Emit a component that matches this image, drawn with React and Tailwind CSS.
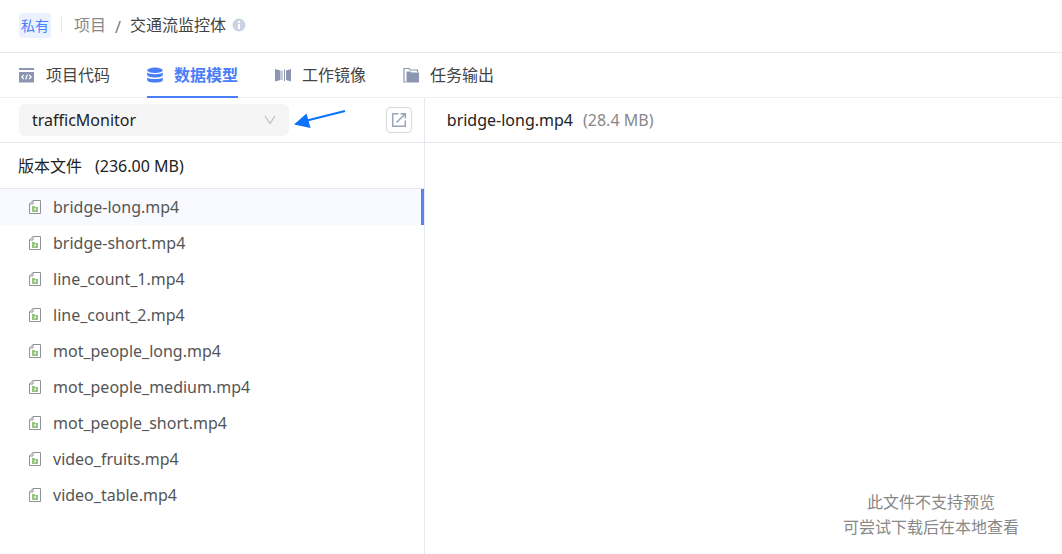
import React, { useState } from "react";

const files = [
  "bridge-long.mp4",
  "bridge-short.mp4",
  "line_count_1.mp4",
  "line_count_2.mp4",
  "mot_people_long.mp4",
  "mot_people_medium.mp4",
  "mot_people_short.mp4",
  "video_fruits.mp4",
  "video_table.mp4",
];

function CodeIcon() {
  return (
    <svg className="size-4 shrink-0" viewBox="0 0 16 16" aria-hidden="true">
      <path d="M0 1h15v2H0zM0 5h15v10.500H0z" fill="#8c96b0" />
      <path d="M4.800 8 2.800 10l2 2M10.200 8l2 2-2 2M8.300 7.500l-1.600 5" fill="none" stroke="#fff" strokeWidth="1.1" />
    </svg>
  );
}

function DataIcon() {
  return (
    <svg className="size-4 shrink-0" viewBox="0 0 16 16" aria-hidden="true">
      <g fill="#4a7df8">
        <ellipse cx="8" cy="3.3" rx="7.8" ry="2.7" />
        <path d="M0.2 5.6C2 7.8 14 7.8 15.8 5.6v2.3c0 3.3-15.6 3.3-15.6 0z" />
        <path d="M0.2 10.4c1.8 2.2 13.8 2.2 15.6 0v2.5c0 3.5-15.6 3.5-15.6 0z" />
      </g>
    </svg>
  );
}

function MirrorIcon() {
  return (
    <svg className="size-4 shrink-0" viewBox="0 0 16 16" aria-hidden="true">
      <path d="M0 2l5.500 1.500v9.500L0 14.500zM6.500 3.500h1v9.500h-1zM9 2.500h1v11.500H9zM16 2l-5 1.500v9.500l5 1.500z" fill="#8c96b0" />
    </svg>
  );
}

function OutputIcon() {
  return (
    <svg className="size-4 shrink-0" viewBox="0 0 16 16" aria-hidden="true">
      <path d="M3 15H1V1.500H6L7.500 3H14.500V5" fill="none" stroke="#8c96b0" strokeWidth="1.2" />
      <path d="M3.500 4.500h4l1 1H16v10H3.500z" fill="#8c96b0" />
    </svg>
  );
}

function VideoFileIcon() {
  return (
    <svg className="h-[14px] w-3 shrink-0" viewBox="0 0 12 14" aria-hidden="true">
      <path d="M4 0.500h7.500v13H0.500V4z" fill="#fff" stroke="#909298" />
      <path d="M4 0.500V4H0.500" fill="none" stroke="#909298" />
      <path d="M3 6h2.500l0.700 1H9v5H3z" fill="#98c482" />
      <path d="M5.200 8.300h1.800v2H5.200z" fill="#e6f2df" />
    </svg>
  );
}

const tabs = [
  { label: "项目代码", Icon: CodeIcon },
  { label: "数据模型", Icon: DataIcon },
  { label: "工作镜像", Icon: MirrorIcon },
  { label: "任务输出", Icon: OutputIcon },
];

export default function App() {
  const [tab, setTab] = useState(1);
  const [file, setFile] = useState(0);

  return (
    <div className="flex min-h-screen flex-col bg-white font-['Noto_Sans','Noto_Sans_CJK_SC',sans-serif] text-base leading-6 text-[#222]">
      <header className="flex h-[53px] items-center border-b border-[#e6e8f0] px-[19px] pb-[2px]">
        <span className="rounded-[3px] bg-[#ebf1ff] px-[2px] text-sm leading-[25px] text-[#4a7df8]">私有</span>
        <span className="ml-[10px] h-4 w-px bg-[#e6e8ee]" />
        <nav aria-label="路径" className="ml-3 flex items-center">
          <a href="#projects" className="text-[#888]">项目</a>
          <span className="mx-[9px] mt-1 text-[#777]">/</span>
          <span className="text-[#444]">交通流监控体</span>
        </nav>
        <button type="button" aria-label="说明" className="ml-[6px]">
          <svg className="size-[14px]" viewBox="0 0 14 14" aria-hidden="true">
            <circle cx="7" cy="7" r="6.500" fill="#ccd3e3" />
            <path d="M6 3h2v2H6zM6 6h2v5H6z" fill="#fff" />
          </svg>
        </button>
      </header>

      <nav aria-label="项目" className="flex h-[45px] gap-[37px] border-b border-[#eceef3] px-[19px]">
        {tabs.map(({ label, Icon }, i) => (
          <button
            key={label}
            type="button"
            onClick={() => setTab(i)}
            className={
              i === tab
                ? "-mb-px flex items-center gap-[11px] whitespace-nowrap border-b-2 border-[#4a7df8] font-bold text-[#4a7df8]"
                : "-mb-px flex items-center gap-[11px] whitespace-nowrap border-b-2 border-transparent text-[#444]"
            }
          >
            <Icon />
            {label}
          </button>
        ))}
      </nav>

      <div className="flex grow">
        <aside className="w-2/5 border-r border-[#e6e8f0]">
          <div className="flex h-[45px] items-center justify-between border-b border-[#e6e8f0] pl-[19px] pr-3">
            <div className="relative w-[270px]">
              <select
                aria-label="数据模型"
                defaultValue="trafficMonitor"
                className="h-8 w-full appearance-none rounded-md bg-[#f5f5f5] pl-[13px] pr-8 text-[#222]"
              >
                <option>trafficMonitor</option>
              </select>
              <svg className="pointer-events-none absolute right-[13px] top-[11px] h-[10px] w-3" viewBox="0 0 12 10" aria-hidden="true">
                <path d="M1 1l5 7.500L11 1" fill="none" stroke="#b8b8b8" strokeWidth="1.1" />
              </svg>
              <svg className="pointer-events-none absolute left-full top-1 ml-1 h-6 w-[54px]" viewBox="0 0 54 24" aria-hidden="true">
                <path d="M52 3L14 12.500" stroke="#0a72ff" strokeWidth="2" />
                <path d="M1 16.500L13.500 5.500 17.500 20z" fill="#0a72ff" />
              </svg>
            </div>
            <button type="button" aria-label="打开" className="flex size-[26px] items-center justify-center rounded-sm border border-[#d9d9d9]">
              <svg className="size-4" viewBox="0 0 16 16" aria-hidden="true">
                <path d="M7.500 1.700H1.700v12.600h12.600V8.500M5.500 10.500l8-8M9.500 1.700h4.800v4.800" fill="none" stroke="#99a3ba" strokeWidth="1.500" />
              </svg>
            </button>
          </div>
          <h2 className="flex h-[46px] items-center gap-[13px] border-b border-[#e6e8f0] px-[18px]">
            <span>版本文件</span>
            <span>(236.00 MB)</span>
          </h2>
          <ul>
            {files.map((name, i) => (
              <li key={name}>
                <button
                  type="button"
                  onClick={() => setFile(i)}
                  className={
                    i === file
                      ? "flex h-9 w-full items-center gap-3 border-r-[3px] border-[#5584f5] bg-[#f9faff] pl-[29px] text-[#555]"
                      : "flex h-9 w-full items-center gap-3 border-r-[3px] border-transparent pl-[29px] text-[#555]"
                  }
                >
                  <VideoFileIcon />
                  {name}
                </button>
              </li>
            ))}
          </ul>
        </aside>

        <main className="flex grow flex-col">
          <div className="flex h-[45px] items-center gap-[10px] border-b border-[#e6e8f0] px-[22px]">
            <h1>{files[file]}</h1>
            <span className="text-[#888]">(28.4 MB)</span>
          </div>
          <p className="mt-auto self-end pb-[14px] pr-[43px] text-center leading-[25px] text-[#888]">
            此文件不支持预览
            <br />
            可尝试下载后在本地查看
          </p>
        </main>
      </div>
    </div>
  );
}
